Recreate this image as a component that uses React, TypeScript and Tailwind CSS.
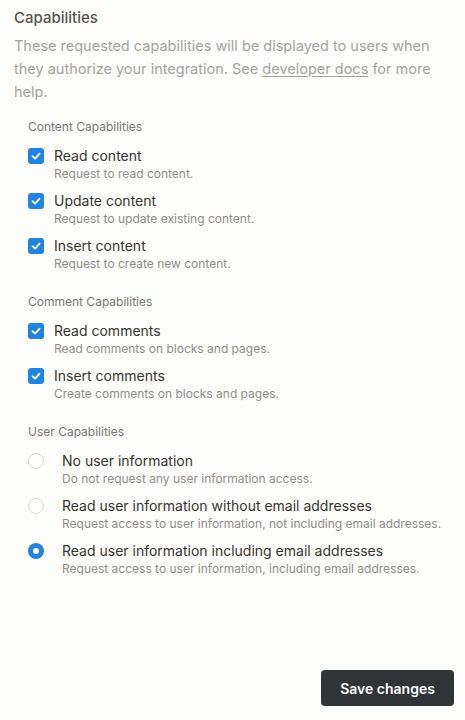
import React from 'react';

type Option = { title: string; desc: string };

const contentCaps: Option[] = [
  { title: 'Read content', desc: 'Request to read content.' },
  { title: 'Update content', desc: 'Request to update existing content.' },
  { title: 'Insert content', desc: 'Request to create new content.' },
];

const commentCaps: Option[] = [
  { title: 'Read comments', desc: 'Read comments on blocks and pages.' },
  { title: 'Insert comments', desc: 'Create comments on blocks and pages.' },
];

const userCaps: Option[] = [
  { title: 'No user information', desc: 'Do not request any user information access.' },
  {
    title: 'Read user information without email addresses',
    desc: 'Request access to user information, not including email addresses.',
  },
  {
    title: 'Read user information including email addresses',
    desc: 'Request access to user information, including email addresses.',
  },
];

const CheckBox = () => (
  <span className="mt-[2px] flex h-4 w-4 shrink-0 items-center justify-center rounded-[3px] bg-[#2383e2]">
    <svg width="12" height="12" viewBox="0 0 12 12" fill="none">
      <path d="M2.5 6.2 5 8.6 9.6 3.6" stroke="#fff" strokeWidth="1.8" strokeLinecap="round" strokeLinejoin="round" />
    </svg>
  </span>
);

const Radio = ({ on }: { on: boolean }) =>
  on ? (
    <span className="mt-[2px] flex h-4 w-4 shrink-0 items-center justify-center rounded-full bg-[#2383e2]">
      <span className="h-[6px] w-[6px] rounded-full bg-white" />
    </span>
  ) : (
    <span className="mt-[2px] h-4 w-4 shrink-0 rounded-full border border-[#dcdad6] bg-white" />
  );

const SectionLabel = ({ children }: { children: React.ReactNode }) => (
  <div className="text-[12px] leading-4 text-[#787774]">{children}</div>
);

const OptionText = ({ opt }: { opt: Option }) => (
  <div className="flex flex-col">
    <span className="text-[14px] leading-5 text-[#37352f]">{opt.title}</span>
    <span className="text-[12px] leading-4 text-[#8f8e8a]">{opt.desc}</span>
  </div>
);

export default function App() {
  return (
    <div
      className="flex h-[720px] w-full flex-col bg-[#fdfdfc] px-[14px] pt-2 pb-[14px]"
      style={{ fontFamily: 'Inter, "Liberation Sans", sans-serif' }}
    >
      <h2 className="text-[15px] font-medium leading-5 text-[#55534e]">Capabilities</h2>
      <p className="mt-[6px] text-[14.5px] leading-[23px] text-[#a4a39f]">
        These requested capabilities will be displayed to users when they authorize your integration. See{' '}
        <span className="underline underline-offset-2">developer docs</span> for more help.
      </p>

      <div className="mt-4 flex flex-col gap-[22px] pl-[14px]">
        <section className="flex flex-col gap-[11px]">
          <SectionLabel>Content Capabilities</SectionLabel>
          <div className="flex flex-col gap-[9px]">
            {contentCaps.map((o) => (
              <div key={o.title} className="flex gap-[10px]">
                <CheckBox />
                <OptionText opt={o} />
              </div>
            ))}
          </div>
        </section>

        <section className="flex flex-col gap-[11px]">
          <SectionLabel>Comment Capabilities</SectionLabel>
          <div className="flex flex-col gap-[9px]">
            {commentCaps.map((o) => (
              <div key={o.title} className="flex gap-[10px]">
                <CheckBox />
                <OptionText opt={o} />
              </div>
            ))}
          </div>
        </section>

        <section className="flex flex-col gap-[11px]">
          <SectionLabel>User Capabilities</SectionLabel>
          <div className="flex flex-col gap-[9px]">
            {userCaps.map((o, i) => (
              <div key={o.title} className="flex gap-[18px]">
                <Radio on={i === 2} />
                <OptionText opt={o} />
              </div>
            ))}
          </div>
        </section>
      </div>

      <div className="mt-auto -mr-[3px] flex justify-end">
        <button className="h-9 w-[133px] rounded-[4px] bg-[#2f3437] text-[14px] font-semibold text-white">
          Save changes
        </button>
      </div>
    </div>
  );
}
